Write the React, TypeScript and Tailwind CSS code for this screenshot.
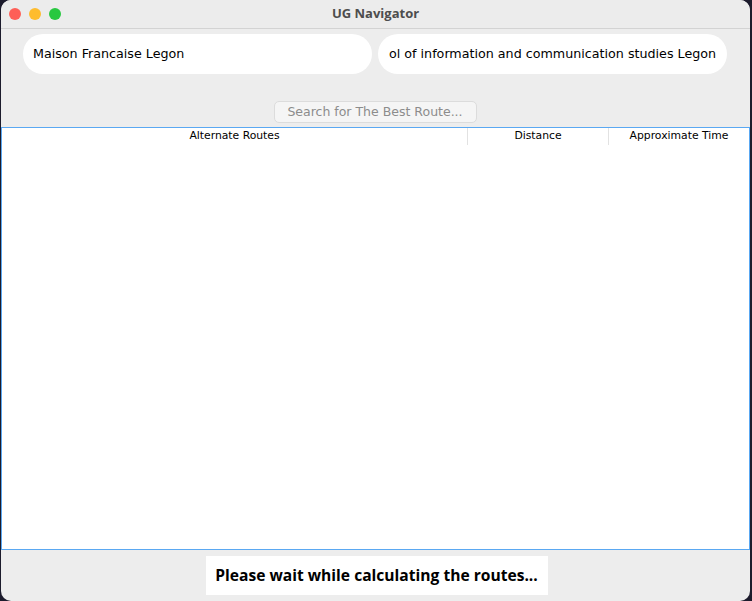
import React from 'react';

function TrafficLights() {
  return (
    <div className="flex items-center gap-[8px] pl-[8px]">
      <span className="w-[12px] h-[12px] rounded-full bg-[#fe5f57]" />
      <span className="w-[12px] h-[12px] rounded-full bg-[#febc2e]" />
      <span className="w-[12px] h-[12px] rounded-full bg-[#28c840]" />
    </div>
  );
}

const columns = [
  { label: 'Alternate Routes', width: 'w-[466px]' },
  { label: 'Distance', width: 'w-[141px]' },
  { label: 'Approximate Time', width: 'flex-1' },
];

export default function App() {
  return (
    <div
      className="w-[752px] h-[601px] bg-[#1c1b2c] pl-[1px] pr-[2px] overflow-hidden"
      style={{ fontFamily: '"DejaVu Sans", "Liberation Sans", sans-serif' }}
    >
      <div className="h-full rounded-[10px] overflow-hidden bg-[#ededed] flex flex-col">
        {/* Title bar */}
        <div className="relative h-[29px] shrink-0 border-b border-[#d3d3d3] bg-[#ececec] flex items-center">
          <TrafficLights />
          <div className="absolute inset-0 flex items-center justify-center text-[13px] font-bold text-[#4d4d4d] font-['Open_Sans',sans-serif]">
            UG Navigator
          </div>
        </div>

        {/* Location fields */}
        <div className="flex gap-[6px] pl-[22px] pr-[22px] pt-[5px]">
          <div className="w-[349px] h-[40px] rounded-full bg-white flex items-center pl-[10px] text-[12.7px] text-black overflow-hidden whitespace-nowrap">
            Maison Francaise Legon
          </div>
          <div className="w-[349px] h-[40px] rounded-full bg-white flex items-center pl-[11px] text-[12.7px] text-black overflow-hidden whitespace-nowrap">
            ol of information and communication studies Legon
          </div>
        </div>

        {/* Search button */}
        <div className="flex justify-center pt-[27px] pb-[4px]">
          <div className="w-[203px] h-[22px] rounded-[5px] bg-[#f5f5f5] border border-[#dcdcdc] flex items-center justify-center text-[12.5px] text-[#8c8c8c] ml-[-1px]">
            Search for The Best Route...
          </div>
        </div>

        {/* Routes table, focused (blue ring) */}
        <div className="flex-1 bg-[#5aa8f2] p-[1px] flex flex-col">
          <div className="flex-1 bg-white flex flex-col">
            <div className="flex h-[17px] text-[10.8px] text-black">
              {columns.map((c, i) => (
                <div
                  key={c.label}
                  className={`${c.width} flex items-center justify-center ${i < columns.length - 1 ? 'border-r border-[#e2e2e2]' : ''}`}
                >
                  {c.label}
                </div>
              ))}
            </div>
          </div>
        </div>

        {/* Status */}
        <div className="h-[51px] shrink-0 flex items-center justify-center">
          <div className="w-[342px] h-[39px] bg-white flex items-center justify-center text-[15.6px] font-bold text-black ml-[2px] whitespace-nowrap font-['Open_Sans',sans-serif]">
            Please wait while calculating the routes...
          </div>
        </div>
      </div>
    </div>
  );
}
